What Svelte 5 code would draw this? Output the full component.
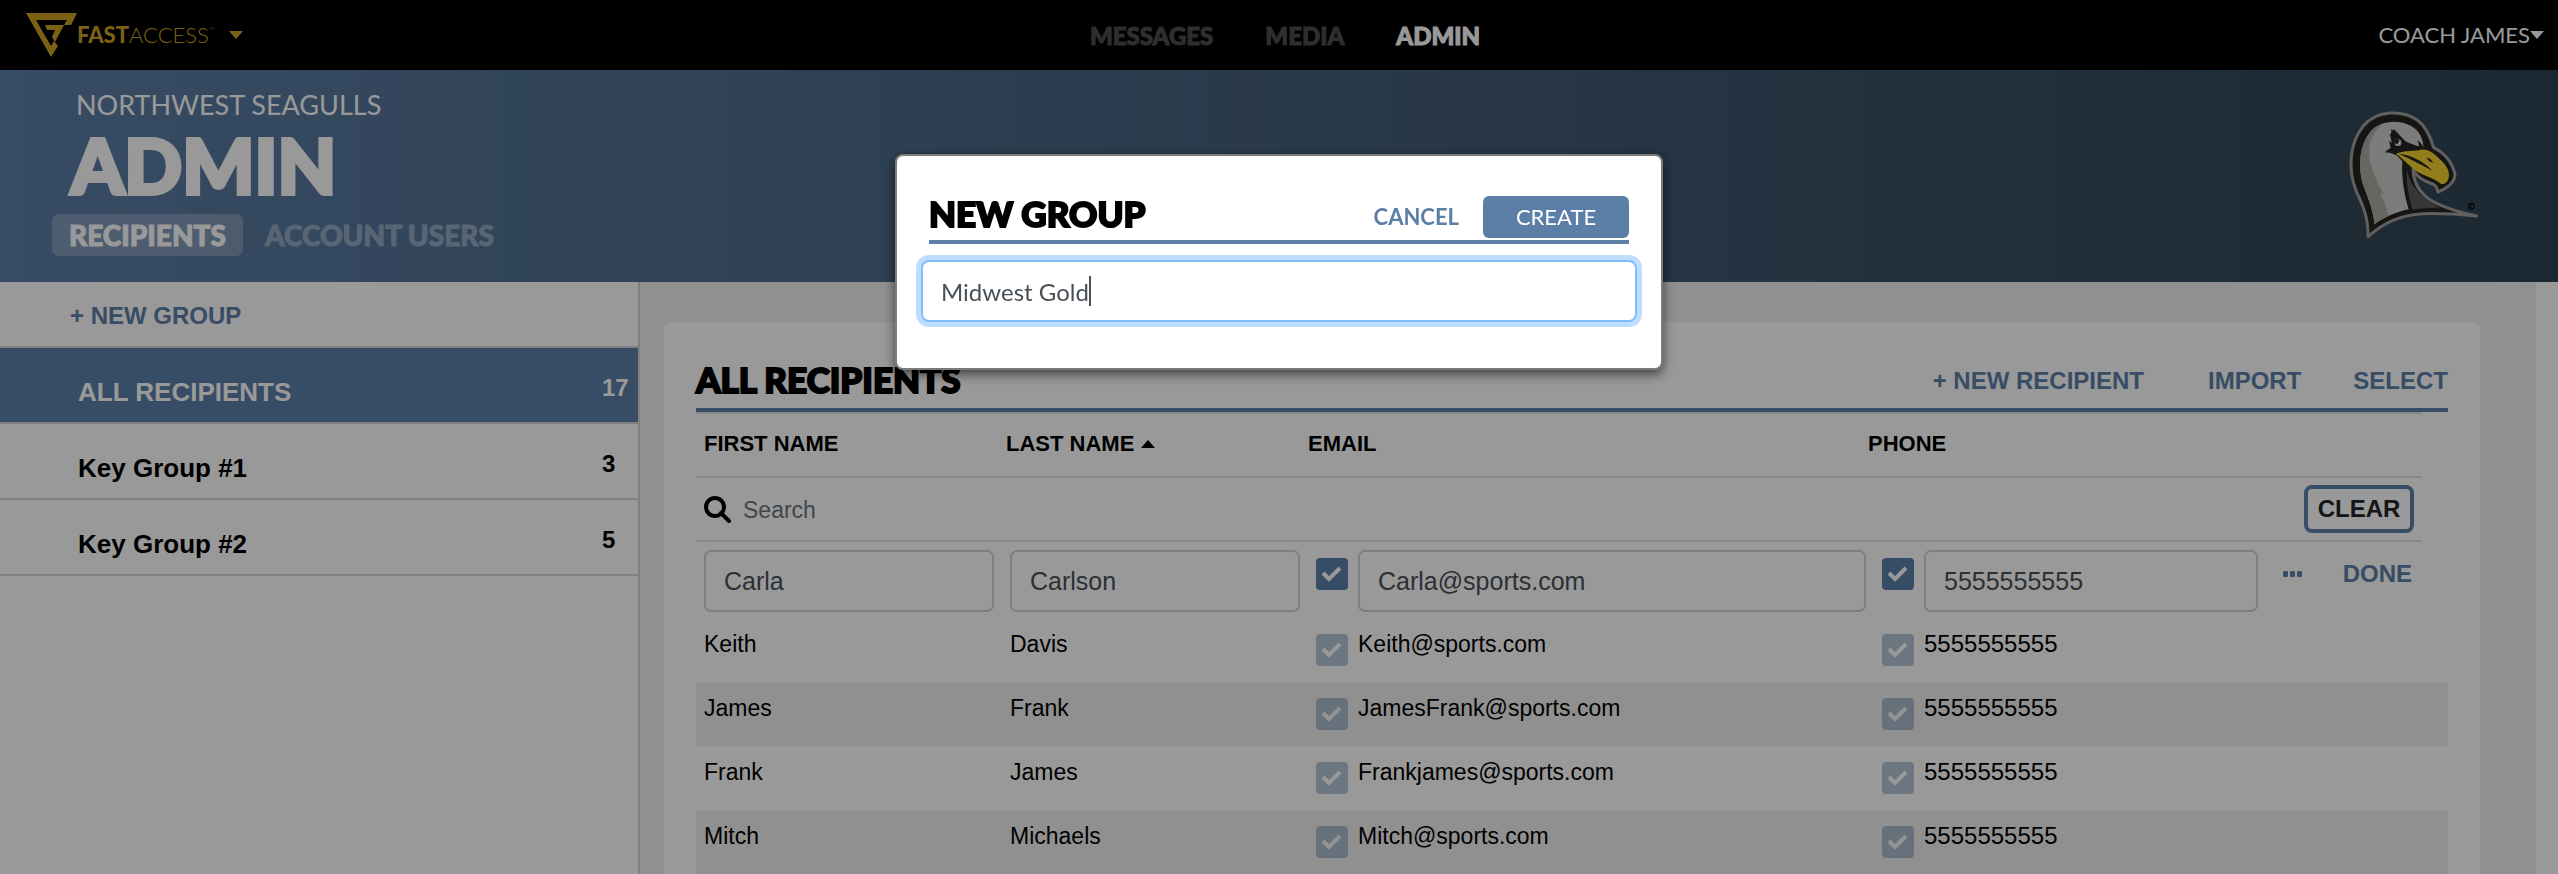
<script lang="ts">
  interface Recipient {
    first: string;
    last: string;
    email: string;
    phone: string;
  }

  const sections = ['MESSAGES', 'MEDIA', 'ADMIN'];
  const tabs = ['RECIPIENTS', 'ACCOUNT USERS'];

  const groups = [
    { name: 'ALL RECIPIENTS', count: 17 },
    { name: 'Key Group #1', count: 3 },
    { name: 'Key Group #2', count: 5 },
  ];

  const recipients: Recipient[] = [
    { first: 'Keith', last: 'Davis', email: 'Keith@sports.com', phone: '5555555555' },
    { first: 'James', last: 'Frank', email: 'JamesFrank@sports.com', phone: '5555555555' },
    { first: 'Frank', last: 'James', email: 'Frankjames@sports.com', phone: '5555555555' },
    { first: 'Mitch', last: 'Michaels', email: 'Mitch@sports.com', phone: '5555555555' },
  ];

  let editing: Recipient = $state({
    first: 'Carla',
    last: 'Carlson',
    email: 'Carla@sports.com',
    phone: '5555555555',
  });
  let selectedGroup = $state('ALL RECIPIENTS');
  let search = $state('');
  let groupName = $state('Midwest Gold');
</script>

<div class="app">
  <header class="topbar">
    <button type="button" class="brand">
      <svg class="mark" viewBox="0 0 51 44" aria-hidden="true">
        <path d="M0 0H51L45 12H38L41 7H10L25 33L28 28L32 33L25 44Z" />
        <path d="M19 12H38L29 29L26 24L29 17H21Z" />
      </svg>
      <span class="wordmark"><b>FAST</b>ACCESS<sup>™</sup></span>
      <svg class="caret" viewBox="0 0 14 8" aria-hidden="true"><path d="M0 0H14L7 8Z" /></svg>
    </button>
    <nav class="sections">
      {#each sections as section}
        <a href="#{section.toLowerCase()}" class:active={section === 'ADMIN'}>{section}</a>
      {/each}
    </nav>
    <button type="button" class="user">
      COACH JAMES
      <svg class="caret" viewBox="0 0 14 8" aria-hidden="true"><path d="M0 0H14L7 8Z" /></svg>
    </button>
  </header>

  <section class="hero">
    <div>
      <p class="team">NORTHWEST SEAGULLS</p>
      <h1>ADMIN</h1>
      <nav class="tabs">
        {#each tabs as tab, i}
          <a href="#tab-{i}" class:active={i === 0}>{tab}</a>
        {/each}
      </nav>
    </div>
    <svg class="mascot" viewBox="0 0 450 432" role="img" aria-label="Northwest Seagulls">
      <!-- outlined silhouette -->
      <path
        d="M84 398C85 345 72 310 49 262C20 190 32 112 70 66C112 16 188 18 232 48C258 68 272 100 281 131C311 146 337 174 345 212C343 237 322 253 293 264C293 252 289 245 278 240C256 232 232 222 219 196C221 250 256 284 298 302C330 316 360 326 410 336C350 330 300 328 250 329C180 333 132 355 84 398Z"
        fill="#232320" stroke="#a39f9f" stroke-width="9" stroke-linejoin="round" />
      <!-- head and neck -->
      <path
        d="M103 361C102 330 88 290 72 250C52 190 58 128 88 88C116 50 172 44 214 66C238 80 250 104 250 132C232 128 214 120 196 112L162 76L150 92L156 118L148 112L152 132L136 142L170 154L187 172C184 220 192 270 206 316C168 324 134 338 103 361Z"
        fill="#cfcfcb" />
      <path
        d="M103 361C102 330 88 290 72 250C52 190 58 128 88 88C100 70 116 62 132 58C88 88 78 142 96 192C106 224 118 248 134 274L122 264C126 290 140 304 146 336C130 344 116 350 103 361Z"
        fill="#aaaaa6" />
      <path d="M201 196C210 240 232 276 300 311C270 312 240 312 218 316C206 280 198 240 201 196Z" fill="#5d5d60" />
      <!-- brow and eye -->
      <path d="M154 74L166 88C186 108 206 124 250 130L242 142L190 140L134 146L154 134L148 110L160 120C154 106 158 94 154 86Z" fill="#232320" />
      <path d="M231 108C242 114 250 126 254 138L236 132C238 124 236 116 231 108Z" fill="#232320" />
      <circle cx="174" cy="116" r="10" fill="#cfcfcb" />
      <circle cx="171" cy="113" r="7" fill="#232320" />
      <circle cx="177" cy="117" r="3" fill="#ffffff" />
      <!-- beak -->
      <path
        d="M168 149C196 138 224 142 240 138C262 132 282 148 298 164C316 180 328 196 327 216C325 232 316 242 304 240C286 226 262 218 240 208C212 192 192 166 168 149Z"
        fill="#f5d030" />
      <path d="M176 149C214 154 244 168 278 200C248 184 214 166 176 149Z" fill="#232320" />
      <path d="M258 160L272 166L280 176L268 172Z" fill="#232320" />
      <g fill="none" stroke="#101416" stroke-width="4">
        <circle cx="394" cy="307" r="9" />
        <path d="M398 303A5 5 0 1 0 398 311" />
      </g>
    </svg>
  </section>

  <div class="body">
    <aside class="groups">
      <button type="button" class="new-group">+ NEW GROUP</button>
      {#each groups as group}
        <button
          type="button"
          class="group"
          class:selected={group.name === selectedGroup}
          onclick={() => (selectedGroup = group.name)}
        >
          <span class="name">{group.name}</span>
          <span class="count">{group.count}</span>
        </button>
      {/each}
    </aside>

    <main class="pane">
      <div class="card">
        <div class="card-head">
          <h2>ALL RECIPIENTS</h2>
          <div class="actions">
            <button type="button" class="link new">+ NEW RECIPIENT</button>
            <button type="button" class="link">IMPORT</button>
            <button type="button" class="link">SELECT</button>
          </div>
        </div>

        <table>
          <colgroup>
            <col class="c-first" />
            <col class="c-last" />
            <col class="c-email" />
            <col class="c-phone" />
            <col class="c-actions" />
            <col class="c-end" />
          </colgroup>
          <thead>
            <tr>
              <th scope="col" class="first">FIRST NAME</th>
              <th scope="col">
                <button type="button" class="sort">
                  LAST NAME
                  <svg class="caret" viewBox="0 0 14 8" aria-hidden="true"><path d="M0 8H14L7 0Z" /></svg>
                </button>
              </th>
              <th scope="col">EMAIL</th>
              <th scope="col">PHONE</th>
              <td></td>
              <td class="end"></td>
            </tr>
            <tr>
              <td colspan="5" class="search-cell">
                <div class="search">
                  <label for="search" aria-label="Search recipients">
                    <svg viewBox="0 0 27 27" aria-hidden="true">
                      <circle cx="11" cy="11" r="9" />
                      <path d="M17 17L25 25" />
                    </svg>
                  </label>
                  <input id="search" type="text" placeholder="Search" bind:value={search} />
                  <button type="button" class="clear" onclick={() => (search = '')}>CLEAR</button>
                </div>
              </td>
              <td class="end"></td>
            </tr>
          </thead>
          <tbody>
            <tr class="edit">
              <td class="first">
                <input type="text" class="field" aria-label="First name" bind:value={editing.first} />
              </td>
              <td class="last">
                <input type="text" class="field" aria-label="Last name" bind:value={editing.last} />
              </td>
              <td class="email">
                <div class="contact">
                  <input type="checkbox" class="check" checked aria-label="Send email" />
                  <input type="text" class="field" aria-label="Email" bind:value={editing.email} />
                </div>
              </td>
              <td class="phone">
                <div class="contact">
                  <input type="checkbox" class="check" checked aria-label="Send text" />
                  <input type="text" class="field" aria-label="Phone" bind:value={editing.phone} />
                </div>
              </td>
              <td colspan="2">
                <div class="row-actions">
                  <button type="button" class="more" aria-label="More">
                    <svg viewBox="0 0 20 6" aria-hidden="true">
                      <rect width="5" height="6" rx="1" />
                      <rect x="7" width="5" height="6" rx="1" />
                      <rect x="14" width="5" height="6" rx="1" />
                    </svg>
                  </button>
                  <button type="button" class="link">DONE</button>
                </div>
              </td>
            </tr>
            {#each recipients as person}
              <tr class="person">
                <td class="first">{person.first}</td>
                <td class="last">{person.last}</td>
                <td class="email">
                  <label class="contact">
                    <input type="checkbox" class="check" checked disabled />
                    {person.email}
                  </label>
                </td>
                <td class="phone">
                  <label class="contact number">
                    <input type="checkbox" class="check" checked disabled />
                    {person.phone}
                  </label>
                </td>
                <td colspan="2"></td>
              </tr>
            {/each}
          </tbody>
        </table>
      </div>
    </main>
  </div>
</div>

<div class="backdrop">
  <form class="modal" role="dialog" aria-modal="true" aria-labelledby="modal-title">
    <div class="modal-head">
      <h2 id="modal-title">NEW GROUP</h2>
      <button type="button" class="cancel">CANCEL</button>
      <button type="button" class="create">CREATE</button>
    </div>
    <div class="name-field">
      <input type="text" aria-label="Group name" bind:value={groupName} />
      <span class="text-caret"></span>
    </div>
  </form>
</div>

<style>
  :global(body) {
    overflow: hidden;
  }
  .app,
  .backdrop {
    --blue: #5c7fa8;
    --rule: #dee2e6;
    --line: #d6d6d6;
    --display: Lato, sans-serif;
    color: #000;
    font-family: 'Liberation Sans', Arial, sans-serif;
  }
  .app,
  .app *,
  .backdrop,
  .backdrop * {
    box-sizing: border-box;
  }
  .app {
    display: flex;
    flex-direction: column;
    min-height: 100vh;
    background: #fff;
  }
  button {
    padding: 0;
    color: inherit;
    font: inherit;
    background: none;
    border: 0;
    cursor: pointer;
  }
  a {
    text-decoration: none;
  }
  h1,
  h2,
  p {
    margin: 0;
  }
  .caret {
    width: 14px;
    height: 8px;
    fill: currentColor;
  }

  /* top bar */
  .topbar {
    display: grid;
    grid-template-columns: 1fr auto 1fr;
    align-items: center;
    height: 70px;
    padding: 0 14px 0 26px;
    font-family: var(--display);
    background: #000;
  }
  .brand {
    display: flex;
    align-items: center;
    justify-self: start;
    color: #cba225;
  }
  .mark {
    width: 51px;
    height: 44px;
    fill: currentColor;
  }
  .wordmark {
    margin-right: 14px;
    font-size: 22px;
    font-weight: 300;
    line-height: 28px;
  }
  .wordmark b {
    font-weight: 900;
  }
  .wordmark sup {
    font-size: 8px;
    line-height: 8px;
    vertical-align: 10px;
  }
  .sections {
    display: flex;
    gap: 52px;
    font-size: 24px;
    font-weight: 900;
    -webkit-text-stroke: 1px currentColor;
  }
  .sections a {
    color: #4d4d4d;
  }
  .sections a.active {
    color: #fff;
  }
  .user {
    display: flex;
    justify-self: end;
    align-items: center;
    color: #fff;
    font-size: 22px;
    line-height: 28px;
  }

  /* hero */
  .hero {
    display: flex;
    align-items: center;
    justify-content: space-between;
    padding: 18px 68px 26px 52px;
    color: #fff;
    font-family: var(--display);
    background: linear-gradient(90deg, #5c7fa8, #2f4352);
  }
  .team {
    padding-left: 24px;
    font-size: 27px;
    line-height: 34px;
  }
  h1 {
    margin: 6px 0 12px;
    padding-left: 19px;
    font-size: 76px;
    font-weight: 900;
    line-height: 74px;
    -webkit-text-stroke: 4px currentColor;
  }
  .tabs {
    display: flex;
    gap: 5px;
    font-size: 28px;
    font-weight: 900;
    line-height: 42px;
  }
  .tabs a {
    padding: 0 17px;
    color: #93a9c1;
    border-radius: 7px;
    -webkit-text-stroke: 1px currentColor;
  }
  .tabs a.active {
    color: #fff;
    background: rgba(255, 255, 255, 0.24);
  }
  .mascot {
    width: 150px;
    height: 144px;
    margin-top: 8px;
  }

  /* group list */
  .body {
    display: flex;
    flex: 1;
  }
  .groups {
    display: flex;
    flex: 0 0 640px;
    flex-direction: column;
    font-weight: 700;
    border-right: 2px solid var(--line);
  }
  .new-group {
    padding: 20px 70px 16px;
    color: var(--blue);
    font-size: 24px;
    line-height: 28px;
    text-align: left;
    border-bottom: 2px solid var(--line);
  }
  .group {
    display: grid;
    grid-template-columns: 1fr 36px;
    height: 76px;
    padding-left: 78px;
    line-height: 32px;
    text-align: left;
    border-bottom: 2px solid var(--line);
  }
  .group.selected {
    color: #fff;
    background: var(--blue);
    background-clip: padding-box;
  }
  .name {
    padding-top: 28px;
    font-size: 26px;
  }
  .count {
    padding-top: 24px;
    font-size: 24px;
  }

  /* recipients */
  .pane {
    display: flex;
    flex: 1;
    margin-right: 22px;
    padding: 40px 56px 0 24px;
    background: #f0f0f0;
  }
  .card {
    flex: 1;
    padding: 0 32px;
    background: #fff;
    border-radius: 8px 8px 0 0;
  }
  .card-head {
    display: flex;
    align-items: flex-end;
    justify-content: space-between;
    height: 90px;
    padding-bottom: 9px;
    border-bottom: 4px solid var(--blue);
  }
  h2 {
    font-family: var(--display);
    font-size: 35px;
    font-weight: 900;
    line-height: 40px;
    -webkit-text-stroke: 2px currentColor;
  }
  .actions {
    display: flex;
    gap: 52px;
    padding-bottom: 4px;
  }
  .link {
    color: var(--blue);
    font-size: 24px;
    font-weight: 700;
    line-height: 28px;
  }
  .new {
    margin-right: 12px;
  }
  table {
    width: 100%;
    table-layout: fixed;
    border-spacing: 0;
  }
  .c-first {
    width: 310px;
  }
  .c-last {
    width: 302px;
  }
  .c-email {
    width: 560px;
  }
  .c-phone {
    width: 398px;
  }
  .c-actions {
    width: 156px;
  }
  .c-end {
    width: 26px;
  }
  th,
  td {
    padding: 0;
    text-align: left;
    vertical-align: top;
  }
  thead th,
  thead td {
    border-bottom: 2px solid var(--rule);
  }
  thead tr:first-child > * {
    height: 66px;
    padding-top: 15px;
    font-size: 22px;
    line-height: 30px;
    border-top: 2px solid var(--rule);
  }
  thead tr > .end {
    border: 0;
  }
  th.first,
  td.first {
    padding-left: 8px;
  }
  .sort {
    display: flex;
    gap: 7px;
    align-items: center;
  }
  .search-cell {
    height: 64px;
  }
  .search {
    display: flex;
    align-items: center;
    height: 62px;
    padding: 0 8px;
  }
  .search label,
  .search svg {
    display: block;
    width: 27px;
    height: 27px;
  }
  .search svg {
    fill: none;
    stroke: #000;
    stroke-width: 4;
    stroke-linecap: round;
  }
  .search input {
    flex: 1;
    padding: 2px 12px 0;
    font: inherit;
    font-size: 23px;
    line-height: 28px;
    background: none;
    border: 0;
    outline: 0;
  }
  .search input::placeholder {
    color: #6c757d;
    opacity: 1;
  }
  .clear {
    width: 110px;
    height: 48px;
    color: #212529;
    font-size: 24px;
    font-weight: 700;
    line-height: 40px;
    border: 4px solid var(--blue);
    border-radius: 8px;
  }
  .edit td {
    height: 76px;
    padding-top: 8px;
  }
  .person td {
    height: 64px;
    padding-top: 12px;
    font-size: 23px;
    line-height: 28px;
  }
  .person:nth-child(odd) {
    background: #f0f0f0;
  }
  td.first {
    padding-right: 12px;
  }
  td.last {
    padding-right: 8px;
    padding-left: 4px;
  }
  td.email {
    padding-right: 2px;
    padding-left: 8px;
  }
  td.phone {
    padding-right: 8px;
    padding-left: 14px;
  }
  .contact {
    display: flex;
    gap: 10px;
    align-items: flex-start;
  }
  .number {
    font-size: 24px;
  }
  .field {
    display: block;
    width: 100%;
    min-width: 0;
    height: 62px;
    padding: 0 18px;
    color: #495057;
    font: inherit;
    font-size: 25px;
    background: #fff;
    border: 2px solid #ced4da;
    border-radius: 7px;
  }
  .check {
    flex: none;
    width: 32px;
    height: 32px;
    margin: 8px 0 0;
    appearance: none;
    background: var(--blue)
      url("data:image/svg+xml,%3Csvg xmlns='http://www.w3.org/2000/svg' viewBox='0 0 32 32'%3E%3Cpath d='M7 15l6 6L24 10' fill='none' stroke='%23fff' stroke-width='4'/%3E%3C/svg%3E");
    border-radius: 4px;
  }
  .check:disabled {
    margin-top: 4px;
    opacity: 0.45;
  }
  .row-actions {
    display: flex;
    align-items: center;
    justify-content: space-between;
    padding: 10px 36px 0 17px;
  }
  .more svg {
    display: block;
    width: 20px;
    height: 6px;
    fill: var(--blue);
  }

  /* new group dialog */
  .backdrop {
    position: fixed;
    inset: 0;
    display: flex;
    align-items: flex-start;
    justify-content: center;
    padding-top: 154px;
    background: rgba(0, 0, 0, 0.4);
  }
  .modal {
    width: 768px;
    padding: 40px 32px 46px;
    font-family: var(--display);
    background: #fff;
    border: 2px solid #7b7b7b;
    border-radius: 8px;
    box-shadow: 0 4px 12px rgba(0, 0, 0, 0.6);
  }
  .modal-head {
    display: flex;
    align-items: flex-start;
    padding-bottom: 2px;
    border-bottom: 4px solid var(--blue);
  }
  .modal h2 {
    flex: 1;
    line-height: 34px;
  }
  .cancel {
    margin-right: 24px;
    color: var(--blue);
    font-size: 22px;
    font-weight: 700;
    line-height: 42px;
  }
  .create {
    width: 146px;
    height: 42px;
    color: #fff;
    font-size: 22px;
    line-height: 40px;
    background: var(--blue);
    border-radius: 6px;
  }
  .name-field {
    position: relative;
    margin: 16px -8px 0;
  }
  .name-field input {
    display: block;
    width: 100%;
    height: 62px;
    padding: 0 18px;
    color: #495057;
    font: inherit;
    font-size: 24px;
    background: #fff;
    border: 2px solid #80bdff;
    border-radius: 8px;
    outline: 0;
    box-shadow: 0 0 0 5px #bfdeff;
  }
  .text-caret {
    position: absolute;
    top: 16px;
    left: 168px;
    width: 2px;
    height: 30px;
    background: #495057;
  }
</style>
